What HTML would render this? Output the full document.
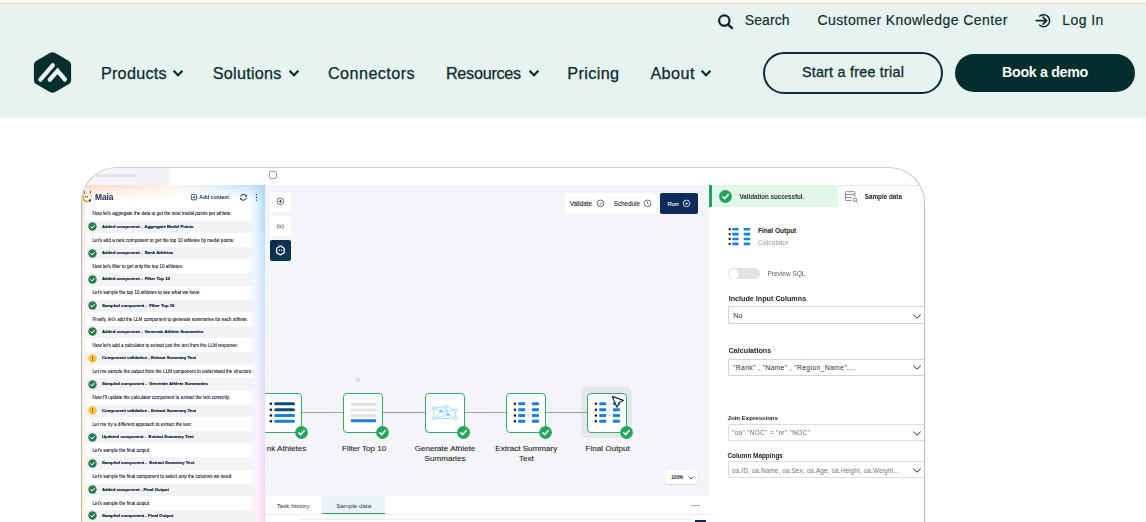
<!DOCTYPE html>
<html lang="en">
<head>
<meta charset="utf-8">
<title>Matillion</title>
<style>
*{box-sizing:border-box;margin:0;padding:0}
html,body{width:1146px;height:522px;overflow:hidden;background:#fff;font-family:"Liberation Sans",sans-serif;color:#0a2b2b}
body{position:relative}
.a{position:absolute;white-space:nowrap}
#strip{position:absolute;left:0;top:0;width:1146px;height:4px;background:#fef9ec;border-bottom:1px solid #f2dfc9}
#hdr{position:absolute;left:0;top:4px;width:1146px;height:114px;background:#e7f3f1}
.nav{position:absolute;top:63.2px;font-size:16.2px;line-height:20px;color:#0a2b2b;white-space:nowrap;-webkit-text-stroke:0.25px #0a2b2b}
.top{position:absolute;top:10.6px;font-size:14px;line-height:18px;color:#0a2b2b;white-space:nowrap;-webkit-text-stroke:0.15px #0a2b2b}
.chev{position:absolute;top:69px;width:12px;height:9px}
.btn{position:absolute;border-radius:22px;font-size:14.3px;text-align:center;white-space:nowrap}
#frame{position:absolute;left:81px;top:167px;width:844.3px;height:380px;border:1px solid #b9b9b9;border-top-color:#cfcfcf;border-radius:36px 36px 0 0;overflow:hidden;background:#fff}
#fi{position:absolute;left:-82px;top:-168px;width:1146px;height:600px;filter:blur(0.3px)}
.mt{font-size:4.55px;line-height:6px;color:#1c2338;-webkit-text-stroke:0.1px #1c2338}
.mc{width:169.2px;height:12.6px;background:#f2f3f5;border-radius:2px}
.mb{font-size:4.3px;line-height:6px;color:#10182c;font-weight:bold;-webkit-text-stroke:0.18px #10182c}
.tb{width:20.8px;height:20.3px;background:#fff;border-radius:2px}
.cbt{font-size:6.3px;line-height:7px;color:#1c1c1c;-webkit-text-stroke:0.1px}
.nd{width:40px;height:40px;background:#fff;border:1.1px solid #33ad66;border-radius:4px}
.nl{font-size:8.1px;line-height:9.7px;color:#232323;-webkit-text-stroke:0.1px;text-align:center;white-space:normal}
.tbx{font-size:6.22px;line-height:7px;color:#333}
#canvas{background-image:radial-gradient(circle,#e4e7ee 0.7px,transparent 1px);background-size:7.75px 18.2px;background-position:-0.8px -1px}
.rl{font-size:6.5px;line-height:8px;color:#222;font-weight:bold}
.rv{font-size:6.4px;line-height:8px}
</style>
</head>
<body>
<div id="strip"></div>
<div id="hdr"></div>

<!-- logo -->
<svg class="a" style="left:32px;top:50px" width="42" height="45" viewBox="32 50 42 45">
  <path d="M49.8 52.9 Q52.5 51.4 55.2 52.9 L68.6 60.7 Q71.1 62.1 71.1 65 L71.1 80 Q71.1 82.9 68.6 84.3 L55.2 92.1 Q52.5 93.6 49.8 92.1 L36.4 84.3 Q33.9 82.9 33.9 80 L33.9 65 Q33.9 62.1 36.4 60.7 Z" fill="#062e2c"/>
  <path d="M40.4 79.6 L52.7 65.3" stroke="#e7f3f1" stroke-width="4.3" stroke-linecap="round" fill="none"/>
  <path d="M49.7 79.7 L57.6 70.8 L64.9 79.5" stroke="#e7f3f1" stroke-width="4.3" stroke-linecap="round" stroke-linejoin="miter" fill="none"/>
</svg>

<div class="nav" id="n1" style="left:100.9px;letter-spacing:0.27px">Products</div>
<div class="nav" id="n2" style="left:212.8px;letter-spacing:0.24px">Solutions</div>
<div class="nav" id="n3" style="left:328px;letter-spacing:0.42px">Connectors</div>
<div class="nav" id="n4" style="left:445.9px;letter-spacing:-0.26px">Resources</div>
<div class="nav" id="n5" style="left:567.2px;letter-spacing:0.4px">Pricing</div>
<div class="nav" id="n6" style="left:650.4px;letter-spacing:0.42px">About</div>
<svg class="chev" style="left:171.7px" viewBox="0 0 12 9"><path d="M1.6 1.8 L6 6.2 L10.4 1.8" stroke="#0a2b2b" stroke-width="2.3" fill="none"/></svg>
<svg class="chev" style="left:288px" viewBox="0 0 12 9"><path d="M1.6 1.8 L6 6.2 L10.4 1.8" stroke="#0a2b2b" stroke-width="2.3" fill="none"/></svg>
<svg class="chev" style="left:527.5px" viewBox="0 0 12 9"><path d="M1.6 1.8 L6 6.2 L10.4 1.8" stroke="#0a2b2b" stroke-width="2.3" fill="none"/></svg>
<svg class="chev" style="left:700px" viewBox="0 0 12 9"><path d="M1.6 1.8 L6 6.2 L10.4 1.8" stroke="#0a2b2b" stroke-width="2.3" fill="none"/></svg>

<!-- top row -->
<svg class="a" style="left:716px;top:12px" width="20" height="20" viewBox="716 12 20 20"><circle cx="724.3" cy="20.6" r="5.2" stroke="#0a2b2b" stroke-width="2.2" fill="none"/><path d="M728.2 24.6 L732 28.2" stroke="#0a2b2b" stroke-width="2.4" stroke-linecap="round"/></svg>
<div class="top" id="t1" style="left:744.8px;letter-spacing:0.08px">Search</div>
<div class="top" id="t2" style="left:817.4px;letter-spacing:0.425px">Customer Knowledge Center</div>
<svg class="a" style="left:1033px;top:11.6px" width="20" height="18" viewBox="1033 12 20 18"><path d="M1039.2 16.6 A6 6 0 1 1 1039.2 24.8" stroke="#0a2b2b" stroke-width="1.5" fill="none"/><path d="M1036.3 20.7 L1046.3 20.7 M1043 17.2 L1046.6 20.7 L1043 24.2" stroke="#0a2b2b" stroke-width="1.7" fill="none" stroke-linecap="round" stroke-linejoin="round"/></svg>
<div class="top" id="t3" style="left:1062.2px;letter-spacing:0.44px">Log In</div>

<!-- buttons -->
<div class="btn" id="b1" style="left:763px;top:52px;width:180px;height:42px;border:2px solid #062e2c;line-height:36px;color:#0a2b2b;letter-spacing:0.25px;-webkit-text-stroke:0.3px #0a2b2b">Start a free trial</div>
<div class="btn" id="b2" style="left:955px;top:54px;width:180px;height:38px;background:#002e2c;line-height:36.5px;color:#fff;font-weight:bold;font-size:14.2px;letter-spacing:-0.3px">Book a demo</div>


<!-- product screenshot frame -->
<div id="frame">
<div id="fi">
  <!-- top bar -->
  <div class="a" style="left:82px;top:168px;width:85px;height:17px;background:#f3f4f8"></div>
  <div class="a" style="left:167px;top:168px;width:6px;height:17px;background:linear-gradient(90deg,#f3f4f8,#fff)"></div>
  <div class="a" style="left:95px;top:174px;width:41px;height:3px;background:#e2e3e8;border-radius:1.5px"></div>
  <div class="a" style="left:82px;top:184.5px;width:843px;height:1px;background:#e9eaee"></div>
  <div class="a" style="left:269px;top:171.2px;width:8.3px;height:8.3px;border:0.9px solid #9a9fc6;border-radius:2px;background:#fff"></div>

  <!-- canvas -->
  <div id="canvas" class="a" style="left:264.5px;top:185px;width:443px;height:311px;background-color:#f3f5f9"></div>
  <div class="a" style="left:707.5px;top:185px;width:2.5px;height:340px;background:#f8f9fb"></div>
<!-- CANVAS ITEMS -->
<div class="a tb" style="left:270px;top:191.7px"></div>
<svg class="a" style="left:276px;top:196.9px" width="9" height="9" viewBox="0 0 9 9"><circle cx="4.4" cy="4.3" r="3.3" fill="none" stroke="#333" stroke-width="0.7"/><path d="M4.4 2.7 V5.9 M2.8 4.3 H6" stroke="#333" stroke-width="0.9"/></svg>
<div class="a tb" style="left:270px;top:216.2px;height:19.8px"></div>
<div class="a" style="left:270px;top:222.6px;width:20.8px;text-align:center;font-size:5.8px;line-height:7px;color:#222;letter-spacing:0.2px">{x}</div>
<div class="a" style="left:270px;top:240.2px;width:20.8px;height:20.8px;border-radius:2px;background:linear-gradient(135deg,#0c2a50,#0b3a52)"></div>
<svg class="a" style="left:274px;top:243px" width="13" height="15" viewBox="0 0 13 15"><path d="M6.4 3 L10.2 5.2 V9.7 L6.4 11.9 L2.6 9.7 V5.2 Z" fill="none" stroke="#fff" stroke-width="1.3" stroke-linejoin="round"/><circle cx="5.4" cy="7.2" r="0.7" fill="#fff"/><circle cx="7.5" cy="7.2" r="0.7" fill="#fff"/><circle cx="4.7" cy="2" r="0.45" fill="#fff"/><circle cx="8.2" cy="2" r="0.45" fill="#fff"/></svg>
<div class="a" style="left:564.7px;top:193px;width:91px;height:20.7px;background:#fff;border-radius:2px"></div>
<div class="a cbt" id="val" style="left:569.7px;top:200.2px">Validate</div>
<svg class="a" style="left:595.5px;top:199.3px" width="9" height="9" viewBox="0 0 9 9"><circle cx="4.5" cy="4.4" r="3.4" fill="none" stroke="#333" stroke-width="0.7"/><path d="M3 4.5 L4.1 5.6 L6.1 3.3" fill="none" stroke="#333" stroke-width="0.7"/></svg>
<div class="a cbt" id="sch" style="left:613.7px;top:200.2px">Schedule</div>
<svg class="a" style="left:643px;top:199.3px" width="9" height="9" viewBox="0 0 9 9"><circle cx="4.5" cy="4.4" r="3.4" fill="none" stroke="#333" stroke-width="0.7"/><path d="M4.5 2.4 V4.5 L5.8 5.6" fill="none" stroke="#333" stroke-width="0.7"/></svg>
<div class="a" style="left:659.7px;top:193px;width:38.1px;height:20.7px;background:#0c2a5c;border-radius:2px"></div>
<div class="a cbt" id="run" style="left:667.5px;top:200.2px;color:#fff;font-size:6.1px">Run</div>
<svg class="a" style="left:681.7px;top:199.3px" width="9" height="9" viewBox="0 0 9 9"><circle cx="4.5" cy="4.4" r="3.3" fill="none" stroke="#fff" stroke-width="0.8"/><path d="M3.7 2.9 L6.2 4.4 L3.7 5.9 Z" fill="#fff"/></svg>
<div class="a" style="left:354.7px;top:377.2px;width:5px;height:5px;border-radius:50%;background:#dcdfe6"></div>
<div class="a" style="left:580.8px;top:386.7px;width:51.5px;height:51.6px;border-radius:6px;background:#e5e7ec"></div>
<div class="a" style="left:264.5px;top:411.8px;width:323px;height:1px;background:#a0a0a0"></div>
<div class="a nd" style="left:262px;top:393px"></div>
<div class="a nd" style="left:343.2px;top:393px"></div>
<div class="a nd" style="left:424.7px;top:393px"></div>
<div class="a nd" style="left:506px;top:393px"></div>
<div class="a nd" style="left:587.2px;top:393px"></div>
<svg class="a" style="left:264px;top:398px" width="36" height="30" viewBox="264 398 36 30"><circle cx="270.9" cy="403.7" r="1.3" fill="#0b1630"/><rect x="274.2" y="402.2" width="20.8" height="3" rx="1.5" fill="#0f4c73"/><circle cx="270.9" cy="409.7" r="1.3" fill="#0b1630"/><rect x="274.2" y="408.2" width="20.8" height="3" rx="1.5" fill="#0f4c73"/><circle cx="270.9" cy="415.5" r="1.3" fill="#0b1630"/><rect x="274.2" y="414.0" width="20.8" height="3" rx="1.5" fill="#1a7fd6"/><circle cx="270.9" cy="421.3" r="1.3" fill="#0b1630"/><rect x="274.2" y="419.8" width="20.8" height="3" rx="1.5" fill="#1a7fd6"/></svg>
<svg class="a" style="left:345px;top:398px" width="36" height="30" viewBox="345 398 36 30"><rect x="350.8" y="403.0" width="25.4" height="3" rx="0.8" fill="#e1e2e4"/><rect x="350.8" y="408.5" width="25.4" height="3" rx="0.8" fill="#e1e2e4"/><rect x="350.8" y="413.9" width="25.4" height="3" rx="0.8" fill="#e1e2e4"/><rect x="350.8" y="419.3" width="25.4" height="3" rx="0.8" fill="#1a7fd6"/></svg>
<svg class="a" style="left:428px;top:402px" width="34" height="22" viewBox="428 402 34 22"><g fill="none" stroke="#8fd0f2" stroke-width="0.7"><path d="M433.5 408 L446 406.5 L455.5 410.5 L455.5 418.5 L433.5 418.5 Z"/><path d="M433.5 408 L448 414.5 L455.5 418.5 M433.5 418.5 L441 411.3 L446 406.5 M441 411.3 L455.5 410.5 M446 406.5 L448 414.5 M433.5 418.5 L448 414.5"/></g><g fill="#f3f9fd" stroke="#8fd0f2" stroke-width="0.7"><circle cx="433.5" cy="408" r="1.6"/><circle cx="446" cy="406.5" r="1.6"/><circle cx="455.5" cy="410.5" r="1.6"/><circle cx="455.5" cy="418.5" r="1.6"/><circle cx="433.5" cy="418.5" r="1.6"/></g><circle cx="441" cy="411.3" r="1.3" fill="#6fbfe9"/><circle cx="448" cy="414.5" r="1.3" fill="#6fbfe9"/></svg>
<svg class="a" style="left:505.8px;top:398px" width="36" height="30" viewBox="0 398 36 30"><circle cx="8.9" cy="403.7" r="1.2" fill="#0b1630"/><rect x="12.2" y="402.2" width="7" height="3" rx="0.8" fill="#1a7fd6"/><g transform="translate(22.5 403.7)"><path d="M-1 -1 L1 1 M-1 1 L1 -1" stroke="#f0a9a0" stroke-width="0.5" fill="none"/></g><rect x="25.9" y="402.2" width="7.1" height="3" rx="0.8" fill="#1a7fd6"/><circle cx="8.9" cy="409.7" r="1.2" fill="#0b1630"/><rect x="12.2" y="408.2" width="7" height="3" rx="0.8" fill="#1a7fd6"/><g transform="translate(22.5 409.7)"><path d="M-1.1 0 H1.1" stroke="#f0a9a0" stroke-width="0.5" fill="none"/></g><rect x="25.9" y="408.2" width="7.1" height="3" rx="0.8" fill="#1a7fd6"/><circle cx="8.9" cy="415.5" r="1.2" fill="#0b1630"/><rect x="12.2" y="414.0" width="7" height="3" rx="0.8" fill="#1a7fd6"/><g transform="translate(22.5 415.5)"><path d="M-1.1 0 H1.1 M0 -1.1 V1.1" stroke="#f0a9a0" stroke-width="0.5" fill="none"/></g><rect x="25.9" y="414.0" width="7.1" height="3" rx="0.8" fill="#1a7fd6"/><circle cx="8.9" cy="421.3" r="1.2" fill="#0b1630"/><rect x="12.2" y="419.8" width="7" height="3" rx="0.8" fill="#1a7fd6"/><g transform="translate(22.5 421.3)"><path d="M-1.1 0 H1.1" stroke="#f0a9a0" stroke-width="0.5" fill="none"/></g><rect x="25.9" y="419.8" width="7.1" height="3" rx="0.8" fill="#1a7fd6"/></svg>
<svg class="a" style="left:587px;top:398px" width="36" height="30" viewBox="0 398 36 30"><circle cx="8.9" cy="403.7" r="1.2" fill="#0b1630"/><rect x="12.2" y="402.2" width="7" height="3" rx="0.8" fill="#1a7fd6"/><g transform="translate(22.5 403.7)"><path d="M-1 -1 L1 1 M-1 1 L1 -1" stroke="#f0a9a0" stroke-width="0.5" fill="none"/></g><rect x="25.9" y="402.2" width="7.1" height="3" rx="0.8" fill="#1a7fd6"/><circle cx="8.9" cy="409.7" r="1.2" fill="#0b1630"/><rect x="12.2" y="408.2" width="7" height="3" rx="0.8" fill="#1a7fd6"/><g transform="translate(22.5 409.7)"><path d="M-1.1 0 H1.1" stroke="#f0a9a0" stroke-width="0.5" fill="none"/></g><rect x="25.9" y="408.2" width="7.1" height="3" rx="0.8" fill="#1a7fd6"/><circle cx="8.9" cy="415.5" r="1.2" fill="#0b1630"/><rect x="12.2" y="414.0" width="7" height="3" rx="0.8" fill="#1a7fd6"/><g transform="translate(22.5 415.5)"><path d="M-1.1 0 H1.1 M0 -1.1 V1.1" stroke="#f0a9a0" stroke-width="0.5" fill="none"/></g><rect x="25.9" y="414.0" width="7.1" height="3" rx="0.8" fill="#1a7fd6"/><circle cx="8.9" cy="421.3" r="1.2" fill="#0b1630"/><rect x="12.2" y="419.8" width="7" height="3" rx="0.8" fill="#1a7fd6"/><g transform="translate(22.5 421.3)"><path d="M-1.1 0 H1.1" stroke="#f0a9a0" stroke-width="0.5" fill="none"/></g><rect x="25.9" y="419.8" width="7.1" height="3" rx="0.8" fill="#1a7fd6"/></svg>
<svg class="a" style="left:294.8px;top:425.9px" width="13" height="13" viewBox="0 0 13 13"><circle cx="6.5" cy="6.5" r="6.4" fill="#26a65b"/><path d="M3.8 6.7 L5.7 8.6 L9.3 4.6" fill="none" stroke="#fff" stroke-width="1.5" stroke-linecap="round" stroke-linejoin="round"/></svg>
<svg class="a" style="left:376.0px;top:425.9px" width="13" height="13" viewBox="0 0 13 13"><circle cx="6.5" cy="6.5" r="6.4" fill="#26a65b"/><path d="M3.8 6.7 L5.7 8.6 L9.3 4.6" fill="none" stroke="#fff" stroke-width="1.5" stroke-linecap="round" stroke-linejoin="round"/></svg>
<svg class="a" style="left:457.3px;top:425.9px" width="13" height="13" viewBox="0 0 13 13"><circle cx="6.5" cy="6.5" r="6.4" fill="#26a65b"/><path d="M3.8 6.7 L5.7 8.6 L9.3 4.6" fill="none" stroke="#fff" stroke-width="1.5" stroke-linecap="round" stroke-linejoin="round"/></svg>
<svg class="a" style="left:538.8px;top:425.9px" width="13" height="13" viewBox="0 0 13 13"><circle cx="6.5" cy="6.5" r="6.4" fill="#26a65b"/><path d="M3.8 6.7 L5.7 8.6 L9.3 4.6" fill="none" stroke="#fff" stroke-width="1.5" stroke-linecap="round" stroke-linejoin="round"/></svg>
<svg class="a" style="left:619.8px;top:425.9px" width="13" height="13" viewBox="0 0 13 13"><circle cx="6.5" cy="6.5" r="6.4" fill="#26a65b"/><path d="M3.8 6.7 L5.7 8.6 L9.3 4.6" fill="none" stroke="#fff" stroke-width="1.5" stroke-linecap="round" stroke-linejoin="round"/></svg>
<svg class="a" style="left:609px;top:393px" width="18" height="18" viewBox="609 393 18 18"><path d="M612.3 396.4 L623.4 400.4 L619.2 402.6 L616.9 407.2 Z" fill="#fff" stroke="#1d2433" stroke-width="1.15" stroke-linejoin="round"/></svg>
<div class="a nl" id="l1" style="left:266.7px;top:443.9px;text-align:left">nk Athletes</div>
<div class="a nl" id="l2" style="left:314.1px;top:443.9px;width:100px">Filter Top 10</div>
<div class="a nl" id="l3" style="left:395px;top:443.9px;width:100px">Generate Athlete<br>Summaries</div>
<div class="a nl" id="l4" style="left:476.29999999999995px;top:443.9px;width:100px">Extract Summary<br>Text</div>
<div class="a nl" id="l5" style="left:557.6px;top:443.9px;width:100px">Final Output</div>
<div class="a" style="left:665.8px;top:470.3px;width:31.7px;height:14.2px;background:#fff;border-radius:1.5px;box-shadow:0 0.5px 1.5px rgba(40,50,80,.12)"></div>
<div class="a" id="zm" style="left:671.3px;top:475.2px;font-size:4.6px;line-height:6px;color:#111;-webkit-text-stroke:0.12px">100%</div>
<svg class="a" style="left:688px;top:474.5px" width="6" height="6" viewBox="0 0 6 6"><path d="M1 1.8 L3 3.9 L5 1.8" fill="none" stroke="#222" stroke-width="0.9"/></svg>
<div class="a" style="left:264.5px;top:495.8px;width:445.5px;height:30px;background:#fff"></div>
<div class="a" style="left:322.2px;top:495.8px;width:63.3px;height:17.7px;background:#eaf2fc"></div>
<div class="a" style="left:322.2px;top:513.3px;width:63.3px;height:1.6px;background:#2aa862"></div>
<div class="a" style="left:264.5px;top:514.4px;width:445.5px;height:0.8px;background:#ecedf0"></div>
<div class="a tbx" id="tk" style="left:276.7px;top:502.3px">Task history</div>
<div class="a tbx" id="sd" style="left:336.2px;top:502.3px">Sample data</div>
<div class="a" style="left:691.3px;top:504.5px;width:8.7px;height:1px;background:#aaa"></div>
<div class="a" style="left:300px;top:518.5px;width:392px;height:0.8px;background:#eceef2"></div>
<div class="a" style="left:695px;top:520px;width:10.8px;height:6px;background:#0c2a5c"></div>
<!-- /CANVAS ITEMS -->
<!-- MAIA -->
<div class="a" style="left:82px;top:184.5px;width:182px;height:340px;background:#fff"></div>
<div class="a" style="left:82px;top:184.5px;width:182.5px;height:16px;background:linear-gradient(90deg,#fbd9c4 0%,#fde6d2 30%,#fdf1e4 50%,#e3f0fb 70%,#b6ddf9 100%);-webkit-mask-image:linear-gradient(180deg,#000 0,rgba(0,0,0,.55) 35%,transparent 100%);mask-image:linear-gradient(180deg,#000 0,rgba(0,0,0,.55) 35%,transparent 100%)"></div>
<div class="a" style="left:248.5px;top:184.5px;width:16px;height:340px;background:linear-gradient(180deg,#a9d7f9 0%,#c4e2fb 25%,#d9defb 50%,#ead8fa 70%,#fbd3f2 100%);-webkit-mask-image:linear-gradient(270deg,#000 0,rgba(0,0,0,.6) 30%,transparent 100%);mask-image:linear-gradient(270deg,#000 0,rgba(0,0,0,.6) 30%,transparent 100%)"></div>
<div class="a" style="left:82px;top:184.5px;width:4.5px;height:340px;background:linear-gradient(180deg,#fcdccf 0%,#fce3e3 30%,#fdeadc 60%,#fdf1c0 100%);-webkit-mask-image:linear-gradient(90deg,#000 0,rgba(0,0,0,.5) 40%,transparent 100%);mask-image:linear-gradient(90deg,#000 0,rgba(0,0,0,.5) 40%,transparent 100%)"></div>
<svg class="a" style="left:80px;top:189px" width="14" height="15" viewBox="80 189 14 15"><circle cx="87.1" cy="197.3" r="4.2" fill="#fff" stroke="#f6d27a" stroke-width="1.2"/><path d="M83.2 195.6 A4.3 4.3 0 0 0 88.6 201.3" fill="none" stroke="#eeb02a" stroke-width="1.9" stroke-linecap="round"/><circle cx="85.5" cy="196.7" r="0.75" fill="#3a2f7a"/><circle cx="87.5" cy="196.7" r="0.75" fill="#3a2f7a"/><circle cx="89.9" cy="200.4" r="1.05" fill="#141c3a"/><path d="M84.3 191.6 V193 M90.5 191.4 V192.8" stroke="#3a2a20" stroke-width="0.9" stroke-linecap="round"/></svg>
<div class="a" id="maia" style="left:95px;top:192px;font-size:8.4px;line-height:11px;font-weight:bold;color:#1b2a4a;letter-spacing:-0.1px">Maia</div>
<svg class="a" style="left:190px;top:193px" width="8" height="8" viewBox="190 193 8 8"><rect x="191.4" y="194.6" width="5.2" height="5.2" rx="0.9" fill="none" stroke="#1b2a4a" stroke-width="0.8"/><path d="M192.8 197.2 H195.2 M194 196 V198.4" stroke="#1b2a4a" stroke-width="0.8"/></svg>
<div class="a" id="addctx" style="left:199.2px;top:194px;font-size:5.15px;line-height:7px;font-weight:bold;color:#1b2a4a">Add context</div>
<svg class="a" style="left:238px;top:192px" width="11" height="11" viewBox="238 192 11 11"><path d="M240.6 196.6 A3 3 0 0 1 246.2 196 M246.2 198 A3 3 0 0 1 240.6 198.6" fill="none" stroke="#1b2a4a" stroke-width="1"/><path d="M246.9 194.6 V196.7 H244.8 Z M239.9 200 V197.9 H242 Z" fill="#1b2a4a"/></svg>
<svg class="a" style="left:255px;top:193px" width="3" height="9" viewBox="0 0 3 9"><circle cx="1.4" cy="1.7" r="0.65" fill="#1b2a4a"/><circle cx="1.4" cy="4.4" r="0.65" fill="#1b2a4a"/><circle cx="1.4" cy="7.1" r="0.65" fill="#1b2a4a"/></svg>
<div class="a mt" style="left:92.6px;top:211.4px">Now let's aggregate the data to get the total medal points per athlete:</div>
<div class="a mc" style="left:85.3px;top:220.6px"></div>
<svg class="a" style="left:87.5px;top:222.2px" width="9" height="9" viewBox="0 0 9 9"><circle cx="4.5" cy="4.5" r="4.2" fill="#2f7d4e"/><path d="M2.6 4.6 L4 6 L6.5 3.2" fill="none" stroke="#fff" stroke-width="1" stroke-linecap="round" stroke-linejoin="round"/></svg>
<div class="a mb" style="left:102px;top:223.7px">Added component -&nbsp; Aggregate Medal Points</div>
<div class="a mt" style="left:92.6px;top:237.7px">Let's add a rank component to get the top 10 athletes by medal points:</div>
<div class="a mc" style="left:85.3px;top:246.9px"></div>
<svg class="a" style="left:87.5px;top:248.5px" width="9" height="9" viewBox="0 0 9 9"><circle cx="4.5" cy="4.5" r="4.2" fill="#2f7d4e"/><path d="M2.6 4.6 L4 6 L6.5 3.2" fill="none" stroke="#fff" stroke-width="1" stroke-linecap="round" stroke-linejoin="round"/></svg>
<div class="a mb" style="left:102px;top:250.0px">Added component -&nbsp; Rank Athletes</div>
<div class="a mt" style="left:92.6px;top:264.0px">Now let's filter to get only the top 10 athletes:</div>
<div class="a mc" style="left:85.3px;top:273.2px"></div>
<svg class="a" style="left:87.5px;top:274.8px" width="9" height="9" viewBox="0 0 9 9"><circle cx="4.5" cy="4.5" r="4.2" fill="#2f7d4e"/><path d="M2.6 4.6 L4 6 L6.5 3.2" fill="none" stroke="#fff" stroke-width="1" stroke-linecap="round" stroke-linejoin="round"/></svg>
<div class="a mb" style="left:102px;top:276.3px">Added component -&nbsp; Filter Top 10</div>
<div class="a mt" style="left:92.6px;top:290.3px">Let's sample the top 10 athletes to see what we have:</div>
<div class="a mc" style="left:85.3px;top:299.5px"></div>
<svg class="a" style="left:87.5px;top:301.1px" width="9" height="9" viewBox="0 0 9 9"><circle cx="4.5" cy="4.5" r="4.2" fill="#2f7d4e"/><path d="M2.6 4.6 L4 6 L6.5 3.2" fill="none" stroke="#fff" stroke-width="1" stroke-linecap="round" stroke-linejoin="round"/></svg>
<div class="a mb" style="left:102px;top:302.6px">Sampled component -&nbsp; Filter Top 10</div>
<div class="a mt" style="left:92.6px;top:316.6px">Finally, let's add the LLM component to generate summaries for each athlete:</div>
<div class="a mc" style="left:85.3px;top:325.8px"></div>
<svg class="a" style="left:87.5px;top:327.4px" width="9" height="9" viewBox="0 0 9 9"><circle cx="4.5" cy="4.5" r="4.2" fill="#2f7d4e"/><path d="M2.6 4.6 L4 6 L6.5 3.2" fill="none" stroke="#fff" stroke-width="1" stroke-linecap="round" stroke-linejoin="round"/></svg>
<div class="a mb" style="left:102px;top:328.9px">Added component -&nbsp; Generate Athlete Summaries</div>
<div class="a mt" style="left:92.6px;top:342.8px">Now let's add a calculator to extract just the text from the LLM response:</div>
<div class="a mc" style="left:85.3px;top:352.1px"></div>
<svg class="a" style="left:87.5px;top:353.7px" width="9" height="9" viewBox="0 0 9 9"><circle cx="4.5" cy="4.5" r="4.2" fill="#f6c343"/><path d="M4.5 2.5 V5" stroke="#7a5a10" stroke-width="0.9" stroke-linecap="round"/><circle cx="4.5" cy="6.4" r="0.5" fill="#7a5a10"/></svg>
<div class="a mb" style="left:102px;top:355.2px">Component validation - Extract Summary Text</div>
<div class="a mt" style="left:92.6px;top:369.1px">Let me sample the output from the LLM component to understand the structure:</div>
<div class="a mc" style="left:85.3px;top:378.3px"></div>
<svg class="a" style="left:87.5px;top:379.9px" width="9" height="9" viewBox="0 0 9 9"><circle cx="4.5" cy="4.5" r="4.2" fill="#2f7d4e"/><path d="M2.6 4.6 L4 6 L6.5 3.2" fill="none" stroke="#fff" stroke-width="1" stroke-linecap="round" stroke-linejoin="round"/></svg>
<div class="a mb" style="left:102px;top:381.4px">Sampled component -&nbsp; Generate Athlete Summaries</div>
<div class="a mt" style="left:92.6px;top:395.4px">Now I'll update the calculator component to extract the text correctly:</div>
<div class="a mc" style="left:85.3px;top:404.6px"></div>
<svg class="a" style="left:87.5px;top:406.2px" width="9" height="9" viewBox="0 0 9 9"><circle cx="4.5" cy="4.5" r="4.2" fill="#f6c343"/><path d="M4.5 2.5 V5" stroke="#7a5a10" stroke-width="0.9" stroke-linecap="round"/><circle cx="4.5" cy="6.4" r="0.5" fill="#7a5a10"/></svg>
<div class="a mb" style="left:102px;top:407.7px">Component validation - Extract Summary Text</div>
<div class="a mt" style="left:92.6px;top:421.7px">Let me try a different approach to extract the text:</div>
<div class="a mc" style="left:85.3px;top:430.9px"></div>
<svg class="a" style="left:87.5px;top:432.5px" width="9" height="9" viewBox="0 0 9 9"><circle cx="4.5" cy="4.5" r="4.2" fill="#2f7d4e"/><path d="M2.6 4.6 L4 6 L6.5 3.2" fill="none" stroke="#fff" stroke-width="1" stroke-linecap="round" stroke-linejoin="round"/></svg>
<div class="a mb" style="left:102px;top:434.0px">Updated component -&nbsp; Extract Summary Text</div>
<div class="a mt" style="left:92.6px;top:448.0px">Let's sample the final output:</div>
<div class="a mc" style="left:85.3px;top:457.2px"></div>
<svg class="a" style="left:87.5px;top:458.8px" width="9" height="9" viewBox="0 0 9 9"><circle cx="4.5" cy="4.5" r="4.2" fill="#2f7d4e"/><path d="M2.6 4.6 L4 6 L6.5 3.2" fill="none" stroke="#fff" stroke-width="1" stroke-linecap="round" stroke-linejoin="round"/></svg>
<div class="a mb" style="left:102px;top:460.3px">Sampled component -&nbsp; Extract Summary Text</div>
<div class="a mt" style="left:92.6px;top:474.3px">Let's sample the final component to select only the columns we need:</div>
<div class="a mc" style="left:85.3px;top:483.5px"></div>
<svg class="a" style="left:87.5px;top:485.1px" width="9" height="9" viewBox="0 0 9 9"><circle cx="4.5" cy="4.5" r="4.2" fill="#2f7d4e"/><path d="M2.6 4.6 L4 6 L6.5 3.2" fill="none" stroke="#fff" stroke-width="1" stroke-linecap="round" stroke-linejoin="round"/></svg>
<div class="a mb" style="left:102px;top:486.6px">Added component - Final Output</div>
<div class="a mt" style="left:92.6px;top:500.6px">Let's sample the final output:</div>
<div class="a mc" style="left:85.3px;top:509.8px"></div>
<svg class="a" style="left:87.5px;top:511.4px" width="9" height="9" viewBox="0 0 9 9"><circle cx="4.5" cy="4.5" r="4.2" fill="#2f7d4e"/><path d="M2.6 4.6 L4 6 L6.5 3.2" fill="none" stroke="#fff" stroke-width="1" stroke-linecap="round" stroke-linejoin="round"/></svg>
<div class="a mb" style="left:102px;top:512.9px">Sampled component - Final Output</div>
<!-- RIGHT PANEL -->
<div class="a" style="left:710px;top:185.5px;width:216px;height:340px;background:#fff"></div>
<div class="a" style="left:709.2px;top:185px;width:129px;height:22.3px;background:#e0f7ea"></div>
<div class="a" style="left:709.2px;top:185px;width:2.5px;height:22.3px;background:#22a35c"></div>
<svg class="a" style="left:718.8px;top:189.8px" width="13" height="13" viewBox="0 0 13 13"><circle cx="6.5" cy="6.5" r="6.4" fill="#22a35c"/><path d="M3.8 6.7 L5.7 8.6 L9.3 4.6" fill="none" stroke="#fff" stroke-width="1.5" stroke-linecap="round" stroke-linejoin="round"/></svg>
<div class="a" id="vs" style="left:739.5px;top:192.8px;font-size:6.3px;line-height:7px;color:#2b3531;font-weight:bold;letter-spacing:-0.05px">Validation successful.</div>
<svg class="a" style="left:844px;top:190px" width="15" height="14" viewBox="844 190 15 14"><g fill="none" stroke="#555" stroke-width="0.7"><path d="M854.8 196.4 V192.6 Q854.8 191.7 853.9 191.7 H846.3 Q845.4 191.7 845.4 192.6 V199.6 Q845.4 200.5 846.3 200.5 H851.6"/><path d="M845.4 194.6 H854.8 M845.4 197.5 H851.5"/><circle cx="855" cy="199.7" r="1.7"/><path d="M856.2 201 L857.6 202.4"/></g></svg>
<div class="a" id="sd2" style="left:864.7px;top:192.8px;font-size:6.34px;line-height:7px;color:#222;font-weight:bold">Sample data</div>
<svg class="a" style="left:727px;top:226px" width="26" height="21" viewBox="727 226 26 21"><circle cx="729.7" cy="229.2" r="1.15" fill="#0b1630"/><rect x="732.4" y="227.89999999999998" width="6.2" height="2.6" rx="0.5" fill="#1a7fd6"/><rect x="743.7" y="227.89999999999998" width="6.4" height="2.6" rx="0.5" fill="#1a7fd6"/><circle cx="729.7" cy="234.1" r="1.15" fill="#0b1630"/><rect x="732.4" y="232.79999999999998" width="6.2" height="2.6" rx="0.5" fill="#1a7fd6"/><rect x="743.7" y="232.79999999999998" width="6.4" height="2.6" rx="0.5" fill="#1a7fd6"/><circle cx="729.7" cy="239" r="1.15" fill="#0b1630"/><rect x="732.4" y="237.7" width="6.2" height="2.6" rx="0.5" fill="#1a7fd6"/><rect x="743.7" y="237.7" width="6.4" height="2.6" rx="0.5" fill="#1a7fd6"/><circle cx="729.7" cy="243.9" r="1.15" fill="#0b1630"/><rect x="732.4" y="242.6" width="6.2" height="2.6" rx="0.5" fill="#1a7fd6"/><rect x="743.7" y="242.6" width="6.4" height="2.6" rx="0.5" fill="#1a7fd6"/></svg>
<div class="a" id="fo" style="left:758px;top:227px;font-size:6.5px;line-height:8px;color:#1c1c1c;font-weight:bold">Final Output</div>
<div class="a" id="calc" style="left:758px;top:238.5px;font-size:6.8px;line-height:8px;color:#969a9e">Calculator</div>
<div class="a" style="left:728.3px;top:268.3px;width:31.7px;height:11.2px;border-radius:6px;background:#e2e3e4"></div>
<div class="a" style="left:729.3px;top:269.2px;width:9.4px;height:9.4px;border-radius:50%;background:#fff;box-shadow:0 0 1px rgba(0,0,0,.15)"></div>
<div class="a" id="psql" style="left:767.5px;top:270.1px;font-size:6.5px;line-height:8px;color:#5a5a5a">Preview SQL</div>
<div class="a rl" id="iic" style="left:728.7px;top:294.8px;font-size:7.2px">Include Input Columns</div>
<div class="a" style="left:728.3px;top:306.3px;width:200px;height:17.4px;border:0.9px solid #d3d3d3;border-radius:1px;background:#fff"></div>
<div class="a rv" id="no" style="left:733.3px;top:311.8px;color:#333;font-size:7.3px">No</div>
<svg class="a" style="left:911.5px;top:312.5px" width="10" height="7" viewBox="0 0 10 7"><path d="M1.2 1.6 L5 5.2 L8.8 1.6" fill="none" stroke="#2a2a2a" stroke-width="1"/></svg>
<div class="a rl" id="calcs" style="left:728.7px;top:346.8px;font-size:7.15px">Calculations</div>
<div class="a" style="left:728.3px;top:358.5px;width:200px;height:17.9px;border:0.9px solid #d3d3d3;border-radius:1px;background:#fff"></div>
<div class="a rv" id="cv" style="left:733px;top:363.6px;color:#333;font-size:6.9px;letter-spacing:0.3px">"Rank" , "Name" , "Region_Name",...</div>
<svg class="a" style="left:911.5px;top:364.2px" width="10" height="7" viewBox="0 0 10 7"><path d="M1.2 1.6 L5 5.2 L8.8 1.6" fill="none" stroke="#2a2a2a" stroke-width="1"/></svg>
<div class="a" style="left:727px;top:416.3px;width:80px;height:6px;overflow:hidden"><div class="a rl" id="je" style="left:0.5px;top:-2.1px;font-size:6.1px">Join Expressions</div></div>
<div class="a" style="left:727.5px;top:424.1px;width:200px;height:17.3px;border:0.9px solid #dedede;border-radius:1px;background:#fff"></div>
<div class="a rv" id="jv" style="left:732px;top:429px;color:#666;font-size:6.4px;letter-spacing:0.34px">"oa"."NOC" = "nr"."NOC"</div>
<svg class="a" style="left:911.5px;top:429.5px" width="10" height="7" viewBox="0 0 10 7"><path d="M1.2 1.6 L5 5.2 L8.8 1.6" fill="none" stroke="#2a2a2a" stroke-width="1"/></svg>
<div class="a rl" id="cm" style="left:727.5px;top:452px;font-size:6.4px">Column Mappings</div>
<div class="a" style="left:727.5px;top:461.2px;width:200px;height:17.3px;border:0.9px solid #dedede;border-radius:1px;background:#fff"></div>
<div class="a rv" id="cmv" style="left:732px;top:466.6px;color:#777;font-size:6.4px;letter-spacing:0.12px">oa.ID, oa.Name, oa.Sex, oa.Age, oa.Height, oa.Weight...</div>
<svg class="a" style="left:911.5px;top:467.1px" width="10" height="7" viewBox="0 0 10 7"><path d="M1.2 1.6 L5 5.2 L8.8 1.6" fill="none" stroke="#2a2a2a" stroke-width="1"/></svg>
<!-- /RIGHT -->
</div>
</div>
</body>
</html>
